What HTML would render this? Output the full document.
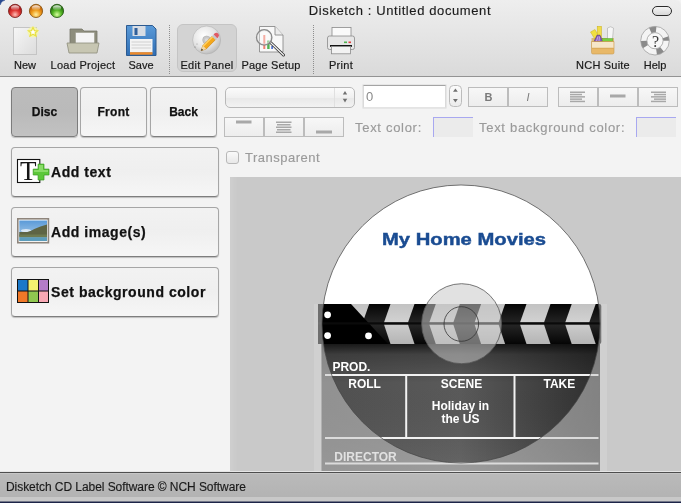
<!DOCTYPE html>
<html><head><meta charset="utf-8">
<style>
*{box-sizing:border-box}
html,body{-webkit-font-smoothing:antialiased;margin:0;padding:0;width:681px;height:503px;overflow:hidden;background:#f3f3f3;font-family:"Liberation Sans",sans-serif}
.a{position:absolute}
div,svg{will-change:transform}
#top{left:0;top:0;width:681px;height:77px;background:linear-gradient(#eeeeee,#e6e6e6 40%,#dadada);border-bottom:1px solid #939393;border-radius:5px 5px 0 0}
.lbl{-webkit-text-stroke:0.2px #1a1a1a;position:absolute;top:59px;font-size:11px;line-height:12px;color:#1a1a1a;white-space:nowrap;text-align:center}
.title{-webkit-text-stroke:0.15px #1d1d1d;left:0;width:800px;top:4px;font-size:13px;line-height:14px;color:#1d1d1d;text-align:center;letter-spacing:0.6px}
.light{position:absolute;top:4px;width:14px;height:14px;border-radius:50%}
.btn{-webkit-text-stroke:0.25px #111;position:absolute;border:1px solid #a6a6a6;border-bottom-color:#7e7e7e;border-radius:4px;background:linear-gradient(#f2f2f2,#efefef 50%,#f6f6f6);box-shadow:0 1px 1px rgba(0,0,0,.22);font-weight:bold;color:#111;white-space:nowrap}
.tab{top:87px;width:66px;height:50px;font-size:12px;line-height:48px;text-align:center}
.big{left:11px;width:208px;height:50px;font-size:14px;letter-spacing:0.55px;line-height:48px;padding-left:39px}
.gl{-webkit-text-stroke:0.15px #9a9a9a;position:absolute;font-size:13px;letter-spacing:0.7px;color:#9a9a9a;white-space:nowrap;line-height:18px}
.seg{position:absolute;border:1px solid #bcbcbc;background:linear-gradient(#f7f7f7,#ededed)}
</style></head><body>
<div id="top" class="a"></div>
<div class="a title">Disketch : Untitled document</div>

<div class="a" style="left:0;top:0;width:5px;height:5px;background:radial-gradient(circle at 5.5px 5.5px,#eeeeee 4.2px,#2a4a90 5.6px)"></div>
<svg class="a" style="left:0;top:0" width="70" height="22">
 <defs>
  <radialGradient id="lr" cx="0.5" cy="0.78" r="0.6"><stop offset="0" stop-color="#ffc0b8"/><stop offset="0.55" stop-color="#e03a36"/><stop offset="1" stop-color="#b01818"/></radialGradient>
  <radialGradient id="lo" cx="0.5" cy="0.78" r="0.6"><stop offset="0" stop-color="#fff0a0"/><stop offset="0.55" stop-color="#f0a020"/><stop offset="1" stop-color="#c86808"/></radialGradient>
  <radialGradient id="lg" cx="0.5" cy="0.78" r="0.6"><stop offset="0" stop-color="#d8ffa0"/><stop offset="0.55" stop-color="#58b828"/><stop offset="1" stop-color="#287810"/></radialGradient>
  <linearGradient id="hl" x1="0" y1="0" x2="0" y2="1"><stop offset="0" stop-color="#fff" stop-opacity="0.9"/><stop offset="1" stop-color="#fff" stop-opacity="0"/></linearGradient>
 </defs>
 <circle cx="15.1" cy="10.9" r="6.6" fill="url(#lr)" stroke="#7a2420" stroke-width="0.9"/>
 <circle cx="36" cy="10.9" r="6.6" fill="url(#lo)" stroke="#8a5a18" stroke-width="0.9"/>
 <circle cx="57" cy="10.9" r="6.6" fill="url(#lg)" stroke="#2a5a18" stroke-width="0.9"/>
 <ellipse cx="15.1" cy="7.8" rx="4.2" ry="2.6" fill="url(#hl)"/>
 <ellipse cx="36" cy="7.8" rx="4.2" ry="2.6" fill="url(#hl)"/>
 <ellipse cx="57" cy="7.8" rx="4.2" ry="2.6" fill="url(#hl)"/>
</svg>
<div class="a" style="left:652px;top:6px;width:20px;height:10px;border:1.5px solid #2a2a2a;border-radius:5px;background:linear-gradient(#f4f4f4,#d8d8d8)"></div>
<!-- pressed edit panel -->
<div class="a" style="left:177px;top:24px;width:60px;height:48px;border-radius:6px;background:#d3d3d3;border:1px solid #c4c4c4"></div>
<!-- separators -->
<div class="a" style="left:169px;top:25px;width:1px;height:49px;background:repeating-linear-gradient(#8e8e8e 0 1px,transparent 1px 2px)"></div>
<div class="a" style="left:313px;top:25px;width:1px;height:49px;background:repeating-linear-gradient(#8e8e8e 0 1px,transparent 1px 2px)"></div>
<svg class="a" style="left:0;top:0" width="681" height="77" viewBox="0 0 681 77">
 <!-- New -->
 <defs>
  <linearGradient id="docg" x1="0" y1="0" x2="1" y2="1"><stop offset="0" stop-color="#f6f6f6"/><stop offset="1" stop-color="#dcdcdc"/></linearGradient>
  <radialGradient id="cdg" cx="0.4" cy="0.35" r="0.7"><stop offset="0" stop-color="#ffffff"/><stop offset="0.6" stop-color="#e4e4e4"/><stop offset="1" stop-color="#b8b8b8"/></radialGradient>
  <linearGradient id="flop" x1="0" y1="0" x2="0" y2="1"><stop offset="0" stop-color="#5a9ad8"/><stop offset="1" stop-color="#2f6eb4"/></linearGradient>
 </defs>
 <rect x="13.5" y="27.5" width="23" height="27" fill="url(#docg)" stroke="#c4c4c4"/>
 <circle cx="33" cy="32" r="5.5" fill="#f8f8a0" opacity="0.8"/>
 <polygon points="33,27.5 34.4,30.6 37.6,30.8 35.1,32.9 36,36 33,34.2 30,36 30.9,32.9 28.4,30.8 31.6,30.6" fill="#ffffff" stroke="#e8e040" stroke-width="1.2"/>
 <!-- Load project folder -->
 <path d="M70,29 h12 l2,2 h13 v13 h-27 z" fill="#8d8d7c" stroke="#77776a" stroke-width="0.8"/>
 <rect x="75.5" y="32.5" width="19" height="12" fill="#f4f4f4" stroke="#9a9a8a" stroke-width="0.6"/>
 <path d="M67,43 h32 l-2,10 h-28 z" fill="#c7c6b2" stroke="#8e8e7c" stroke-width="0.8"/>
 <!-- Save floppy -->
 <path d="M126.5,25.5 h26 l3.5,3.5 v26.5 h-29.5 z" fill="url(#flop)" stroke="#2c5a90"/>
 <rect x="132.5" y="26" width="13" height="10" fill="#d8dde4"/>
 <rect x="134.5" y="28" width="3" height="7" fill="#2f5f9a"/>
 <rect x="130" y="39" width="22.5" height="13.5" fill="#f4f4f4"/>
 <line x1="131.5" y1="42" x2="151" y2="42" stroke="#c8c8c8" stroke-width="0.8"/>
 <line x1="131.5" y1="45" x2="151" y2="45" stroke="#c8c8c8" stroke-width="0.8"/>
 <line x1="131.5" y1="48" x2="151" y2="48" stroke="#c8c8c8" stroke-width="0.8"/>
 <rect x="130" y="52.2" width="22.5" height="2.5" fill="#ee8a2a"/>
 <!-- Edit panel CD + pencil -->
 <circle cx="206.6" cy="40" r="14" fill="url(#cdg)" stroke="#b0b0b0" stroke-width="0.6"/>
 <circle cx="206.6" cy="40" r="4" fill="#c8c8c8" stroke="#a8a8a8" stroke-width="0.5"/>
 <circle cx="206.6" cy="40" r="1.8" fill="#d9d9d9"/>
 <g transform="translate(201,50.8) rotate(-45)">
  <path d="M0,0 L5,-2.4 H18.5 V2.4 H5 Z" fill="#f4a81c" stroke="#c07810" stroke-width="0.5"/>
  <path d="M0,0 L5,-2.4 V2.4 Z" fill="#f0d8a8"/>
  <path d="M0,0 L2,-1 V1 Z" fill="#222"/>
  <rect x="5" y="-2.4" width="13.5" height="1.4" fill="#ffd060"/>
  <rect x="18" y="-2.6" width="2.5" height="5.2" fill="#c8c8c8"/>
  <path d="M20.5,-2.6 h1.2 a2.6,2.6 0 0 1 0,5.2 h-1.2 z" fill="#e05a64"/>
 </g>
 <circle cx="195" cy="47" r="0.6" fill="#777"/><circle cx="197" cy="44" r="0.5" fill="#888"/>
 <!-- Page setup -->
 <path d="M259.5,26.5 h15.5 l8,8.5 v17 h-23.5 z" fill="#f8f8f8" stroke="#8c8c8c" stroke-width="0.9"/>
 <path d="M275,26.5 v8.5 h8" fill="#ececec" stroke="#8c8c8c" stroke-width="0.9"/>
 <rect x="263.3" y="35" width="2" height="14" fill="#f08070"/>
 <rect x="267.2" y="40.5" width="2.4" height="8.5" fill="#50b050"/>
 <rect x="271.3" y="46" width="1.6" height="3" fill="#4466cc"/>
 <path d="M270.5,42.5 L283.5,55" stroke="#333" stroke-width="3" stroke-linecap="round"/>
 <path d="M270.5,42.5 L283.5,55" stroke="#f4f4f4" stroke-width="1.2" stroke-linecap="round"/>
 <circle cx="264.2" cy="37.4" r="7.6" fill="rgba(255,255,255,0.35)" stroke="#8a8a8a" stroke-width="1.5"/>
 <circle cx="264.2" cy="37.4" r="6.6" fill="none" stroke="#e8e8e8" stroke-width="0.6"/>
 <!-- Print -->
 <rect x="332" y="27.5" width="19" height="10" fill="#fafafa" stroke="#8a8a8a" stroke-width="0.8"/>
 <rect x="327.5" y="36" width="27" height="13.5" rx="2" fill="#e6e6e6" stroke="#8a8a8a" stroke-width="0.8"/>
 <rect x="344" y="41.5" width="3" height="1.6" fill="#50b050"/>
 <rect x="348.5" y="41.5" width="2.5" height="1.6" fill="#e04040"/>
 <rect x="330" y="45" width="22" height="1.8" fill="#111"/>
 <rect x="331.5" y="46.5" width="19" height="7.3" fill="#f2f2f2" stroke="#8a8a8a" stroke-width="0.8"/>
 <!-- NCH suite -->
 <rect x="591.5" y="38" width="22.5" height="4" fill="#d8b878"/>
 <path d="M590.5,32 l4.5,-2.5 l5,9 l-4,2.5 z" fill="#f0e040" stroke="#c8b020" stroke-width="0.5"/>
 <rect x="597.2" y="26.3" width="4.3" height="12" fill="#f0dc48" stroke="#c8b020" stroke-width="0.5"/>
 <path d="M607.5,28 q3,-2.5 6,0 l-1,11 h-5 z" fill="#f6f6f6" stroke="#a8a8a8" stroke-width="0.6"/>
 <path d="M594,41.7 l3,-6.5 h3 l2.6,6.5 z" fill="#8a5cc0" stroke="#4a2a80" stroke-width="0.6"/>
 <path d="M596.5,41 l1.5,-4.5 M599,41 l0.5,-4.5" stroke="#e8e0f0" stroke-width="0.6"/>
 <rect x="602.6" y="38.5" width="10" height="3" fill="#78d040" stroke="#50a020" stroke-width="0.4"/>
 <path d="M591.5,41.5 h22.5 v11 a1.5,1.5 0 0 1 -1.5,1.5 h-19.5 a1.5,1.5 0 0 1 -1.5,-1.5 z" fill="#e8b868" stroke="#c89a50" stroke-width="0.6"/>
 <rect x="592" y="42" width="21.5" height="6" fill="#f6e6c8"/>
 <line x1="592" y1="48.2" x2="613.5" y2="48.2" stroke="#d0a050" stroke-width="0.7"/>
 <!-- Help lifebuoy -->
 <circle cx="655" cy="40.7" r="11.2" fill="none" stroke="#f4f4f4" stroke-width="6.2"/>
 <circle cx="655" cy="40.7" r="11.2" fill="none" stroke="#8a8a8a" stroke-width="6.2" stroke-dasharray="6 12.85" stroke-dashoffset="-9.9"/>
 <circle cx="655" cy="40.7" r="14.3" fill="none" stroke="#a0a0a0" stroke-width="0.8"/>
 <circle cx="655" cy="40.7" r="8.1" fill="#f8f8f8" stroke="#a0a0a0" stroke-width="0.8"/>
 <text x="655.5" y="47" font-family="Liberation Serif" font-size="16" text-anchor="middle" fill="#3a3a3a">?</text>
</svg>
<div class="lbl" style="left:0;width:50px">New</div>
<div class="lbl" style="left:43px;width:80px;letter-spacing:0.25px">Load Project</div>
<div class="lbl" style="left:111px;width:60px">Save</div>
<div class="lbl" style="left:172px;width:70px;letter-spacing:0.3px">Edit Panel</div>
<div class="lbl" style="left:236px;width:70px;letter-spacing:0.15px">Page Setup</div>
<div class="lbl" style="left:311px;width:60px;letter-spacing:0.3px">Print</div>
<div class="lbl" style="left:563px;width:80px;letter-spacing:0.2px">NCH Suite</div>
<div class="lbl" style="left:625px;width:60px">Help</div>

<!-- tabs -->
<div class="btn tab" style="left:11px;width:67px;background:linear-gradient(#bcbcbc,#bababa 50%,#c2c2c2);border-color:#7c7c7c">Disc</div>
<div class="btn tab" style="left:80px;width:67px;letter-spacing:0.3px">Front</div>
<div class="btn tab" style="left:150px;width:67px">Back</div>
<!-- big buttons -->
<div class="btn big" style="top:147px">Add text</div>
<div class="btn big" style="top:207px">Add image(s)</div>
<div class="btn big" style="top:267px">Set background color</div>
<svg class="a" style="left:0;top:140px" width="60" height="180" viewBox="0 140 60 180">
 <rect x="17.5" y="159.5" width="22.3" height="23" fill="#fff" stroke="#111" stroke-width="1.1"/>
 <text x="19.9" y="180.3" font-family="Liberation Serif" font-size="27" fill="#151515">T</text>
 <path d="M38.1,164.1 h5.9 v5 h5 v5.9 h-5 v5 h-5.9 v-5 h-4.9 v-5.9 h4.9 z" fill="#5cc83a" stroke="#3a9a22" stroke-width="0.7"/>
 <path d="M39,165 h4 v5 h5 v2 h-5 h-4 h-4.9 v-2 h4.9 z" fill="#9ce47c" opacity="0.7"/>
 <!-- image icon -->
 <rect x="17.8" y="218.8" width="30.6" height="23.9" fill="#fff" stroke="#8e857c" stroke-width="1.6"/>
 <defs><linearGradient id="sky" x1="0" y1="0" x2="0" y2="1"><stop offset="0" stop-color="#5a9ad8"/><stop offset="1" stop-color="#b8d4ec"/></linearGradient></defs>
 <rect x="19.3" y="220.5" width="27.7" height="20.5" fill="url(#sky)"/>
 <ellipse cx="26" cy="230.5" rx="5" ry="1.6" fill="#f0f4f8" opacity="0.8"/>
 <path d="M19.3,232 h8 q4,-1 7,-3 q6,-3 12.7,-4.5 v12 h-27.7 z" fill="#5e6444"/>
 <path d="M19.3,234.5 h27.7 v3 h-27.7 z" fill="#6e7a50"/>
 <rect x="19.3" y="237.3" width="27.7" height="3.7" fill="#5c9cba"/>
 <!-- color grid -->
 <rect x="17" y="279" width="32" height="24" fill="#111"/>
 <rect x="18" y="280" width="9.5" height="10.5" fill="#1a78c8"/>
 <rect x="28.5" y="280" width="9.5" height="10.5" fill="#f4f070"/>
 <rect x="39" y="280" width="9" height="10.5" fill="#b47cc8"/>
 <rect x="18" y="291.5" width="9.5" height="10.5" fill="#f07828"/>
 <rect x="28.5" y="291.5" width="9.5" height="10.5" fill="#90c850"/>
 <rect x="39" y="291.5" width="9" height="10.5" fill="#f8a8b4"/>
</svg>
<!-- font dropdown -->
<div class="a" style="left:225px;top:87px;width:130px;height:21px;border:1px solid #b8b8b8;border-radius:5px;background:linear-gradient(#fbfbfb,#f0f0f0 50%,#e8e8e8 51%,#f2f2f2)"></div>
<div class="a" style="left:334px;top:88px;width:1px;height:19px;background:#e0e0e0"></div>
<svg class="a" style="left:335px;top:88px" width="20" height="20"><path d="M7.8,6.6 L10,3 L12.2,6.6 z M7.8,10.7 L10,14.6 L12.2,10.7 z" fill="#707070"/></svg>
<!-- size field -->
<div class="a" style="left:362px;top:84px;width:85px;height:25px;border:1px solid #e6e6e6;border-radius:1px"></div><div class="a" style="left:363px;top:85px;width:83px;height:23px;background:#fff;border:1px solid #dadada;border-top-color:#a4a4a4;border-bottom-color:#e4e4e4"></div>
<div class="a" style="left:366px;top:89px;font-size:13px;line-height:16px;color:#8a8a8a">0</div>
<div class="a" style="left:449px;top:85px;width:13px;height:22px;border:1px solid #bcbcbc;border-radius:4.5px;background:linear-gradient(#fbfbfb,#ececec)"></div>
<svg class="a" style="left:449px;top:85px" width="13" height="22"><path d="M4,6.8 l2.4,-3.4 l2.4,3.4 z M4,14 l2.4,3.6 l2.4,-3.6 z" fill="#707070"/></svg>
<!-- B I -->
<div class="seg" style="left:468px;top:87px;width:40px;height:20px"></div>
<div class="seg" style="left:508px;top:87px;width:40px;height:20px"></div>
<div class="a" style="left:468px;top:90px;width:41px;text-align:center;font-size:11px;font-weight:bold;color:#7a7a7a;line-height:14px">B</div>
<div class="a" style="left:508px;top:90px;width:40px;text-align:center;font-size:11px;font-style:italic;color:#7a7a7a;line-height:14px">I</div>
<!-- align -->
<div class="seg" style="left:558px;top:87px;width:40px;height:20px"></div>
<div class="seg" style="left:598px;top:87px;width:40px;height:20px"></div>
<div class="seg" style="left:638px;top:87px;width:40px;height:20px"></div>
<svg class="a" style="left:558px;top:87px" width="120" height="20">
 <g fill="#a8a8a8">
 <rect x="12" y="4.5" width="15" height="1.5"/><rect x="12" y="6.8" width="12" height="1.5"/><rect x="12" y="9.1" width="15" height="1.5"/><rect x="12" y="11.4" width="12" height="1.5"/><rect x="12" y="13.7" width="15" height="1.5"/>
 <rect x="52" y="7.5" width="15.5" height="3"/>
 <rect x="93" y="4.5" width="15" height="1.5"/><rect x="96" y="6.8" width="12" height="1.5"/><rect x="93" y="9.1" width="15" height="1.5"/><rect x="96" y="11.4" width="12" height="1.5"/><rect x="93" y="13.7" width="15" height="1.5"/>
 </g>
</svg>
<!-- valign -->
<div class="seg" style="left:224px;top:117px;width:40px;height:20px"></div>
<div class="seg" style="left:264px;top:117px;width:40px;height:20px"></div>
<div class="seg" style="left:304px;top:117px;width:40px;height:20px"></div>
<svg class="a" style="left:224px;top:117px" width="120" height="20">
 <g fill="#a8a8a8">
 <rect x="12" y="3.5" width="15.5" height="3"/>
 <rect x="52" y="4.5" width="15.5" height="1.5"/><rect x="53" y="7" width="13.5" height="1.5"/><rect x="52" y="9.5" width="15.5" height="1.5"/><rect x="53" y="12" width="13.5" height="1.5"/><rect x="52" y="14.5" width="15.5" height="1.5"/>
 <rect x="92" y="13.5" width="16" height="3"/>
 </g>
</svg>
<div class="gl" style="left:355px;top:119px">Text color:</div>
<div class="a" style="left:433px;top:117px;width:40px;height:20px;background:#ebebeb;border-top:1px solid #a8a8f0;border-left:1px solid #a8a8f0"></div>
<div class="gl" style="left:479px;top:119px">Text background color:</div>
<div class="a" style="left:636px;top:117px;width:40px;height:20px;background:#ebebeb;border-top:1px solid #a8a8f0;border-left:1px solid #a8a8f0"></div>
<!-- transparent -->
<div class="a" style="left:226px;top:151px;width:13px;height:13px;border:1px solid #b8b8b8;border-radius:3px;background:linear-gradient(#fafafa,#e8e8e8)"></div>
<div class="gl" style="left:245px;top:149px;letter-spacing:0.5px">Transparent</div>
<!-- canvas -->
<div class="a" style="left:230px;top:177px;width:451px;height:295px;background:#c9c9c9"></div>

<svg class="a" style="left:230px;top:177px" width="451" height="295" viewBox="230 177 451 295">
 <defs>
  <clipPath id="cv"><rect x="230" y="177" width="451" height="295"/></clipPath><linearGradient id="edg" x1="0" y1="0" x2="1" y2="0"><stop offset="0" stop-color="#d6d6d6"/><stop offset="1" stop-color="#cacaca"/></linearGradient><clipPath id="sc"><rect x="318" y="304" width="282.5" height="40"/></clipPath>
  <linearGradient id="stk" x1="0" y1="0" x2="0" y2="1"><stop offset="0" stop-color="#050505"/><stop offset="0.5" stop-color="#262626"/><stop offset="1" stop-color="#050505"/></linearGradient>
  <linearGradient id="gry" x1="0" y1="0" x2="0" y2="1"><stop offset="0" stop-color="#c2c2c2"/><stop offset="1" stop-color="#d2d2d2"/></linearGradient>
  <linearGradient id="gry2" x1="0" y1="0" x2="0" y2="1"><stop offset="0" stop-color="#cccccc"/><stop offset="1" stop-color="#b4b4b4"/></linearGradient>
  <linearGradient id="body" x1="0" y1="0" x2="1" y2="0"><stop offset="0" stop-color="#505050"/><stop offset="0.5" stop-color="#5a5a5a"/><stop offset="1" stop-color="#2e2e2e"/></linearGradient>
  <linearGradient id="bodyv" x1="0" y1="0" x2="0" y2="1"><stop offset="0" stop-color="#000" stop-opacity="0.7"/><stop offset="0.08" stop-color="#000" stop-opacity="0.25"/><stop offset="0.3" stop-color="#000" stop-opacity="0"/><stop offset="1" stop-color="#fff" stop-opacity="0.08"/></linearGradient>
 </defs>
 <g clip-path="url(#cv)">
 <rect x="230" y="177" width="451" height="295" fill="#cacaca"/>
 <rect x="230" y="177" width="8" height="295" fill="url(#edg)"/>
 <circle cx="461" cy="324" r="139" fill="#fff"/>
 <!-- clapperboard -->
 <rect x="314" y="304" width="293" height="170" fill="#dadada"/>
 <rect x="321.5" y="344" width="278.5" height="130" fill="url(#body)"/>
 <rect x="321.5" y="344" width="278.5" height="130" fill="url(#bodyv)"/>
 <rect x="318" y="304" width="283.3" height="40" rx="2" fill="url(#stk)"/>
 <g clip-path="url(#sc)"><g fill="url(#gry)"><polygon points="345.2,304 369.2,304 362.7,322.5 338.7,322.5"/><polygon points="390.5,304 414.5,304 408,322.5 384,322.5"/><polygon points="435.8,304 459.8,304 453.3,322.5 429.3,322.5"/><polygon points="481.1,304 505.1,304 498.6,322.5 474.6,322.5"/><polygon points="526.5,304 550.5,304 544,322.5 520,322.5"/><polygon points="571.7,304 595.7,304 589.2,322.5 565.2,322.5"/><polygon points="617.0,304 641.0,304 634.5,322.5 610.5,322.5"/></g>
 <g fill="url(#gry2)"><polygon points="338.7,324.5 362.7,324.5 369.2,344 345.2,344"/><polygon points="384,324.5 408,324.5 414.5,344 390.5,344"/><polygon points="429.3,324.5 453.3,324.5 459.8,344 435.8,344"/><polygon points="474.6,324.5 498.6,324.5 505.1,344 481.1,344"/><polygon points="520,324.5 544,324.5 550.5,344 526.5,344"/><polygon points="565.2,324.5 589.2,324.5 595.7,344 571.7,344"/><polygon points="610.5,324.5 634.5,324.5 641.0,344 617.0,344"/></g>
 </g><polygon points="318,304 351,304 388,344 318,344" fill="#000"/>
 <rect x="318" y="322.3" width="282.5" height="2.2" fill="#0a0a0a"/>
 <g fill="#fff"><circle cx="327.6" cy="314.8" r="3.4"/><circle cx="327.6" cy="335.6" r="3.4"/><circle cx="368.5" cy="335.8" r="3.4"/></g>
 <g fill="#f2f2f2">
  <rect x="325" y="374" width="273.5" height="2"/>
  <rect x="405.2" y="375" width="2" height="63.5"/>
  <rect x="513.5" y="375" width="2" height="63.5"/>
  <rect x="325" y="437" width="273.5" height="2"/>
  <rect x="325" y="462.5" width="273.5" height="2"/>
 </g>
 <g fill="#fff" font-family="Liberation Sans" font-weight="bold" font-size="12">
  <text x="332.4" y="370.9">PROD.</text>
  <text x="364.6" y="388.3" text-anchor="middle">ROLL</text>
  <text x="461.5" y="388.3" text-anchor="middle">SCENE</text>
  <text x="559.4" y="388.3" text-anchor="middle">TAKE</text>
  <text x="460.4" y="410.3" text-anchor="middle">Holiday in</text>
  <text x="460.5" y="422.6" text-anchor="middle">the US</text>
  <text x="334.3" y="461.3">DIRECTOR</text>
 </g>
 <!-- dim outside disc -->
 <path d="M230,177 H681 V472 H230 Z M322,324 a139,139 0 1 0 278,0 a139,139 0 1 0 -278,0 Z" fill="#c9c9c9" fill-opacity="0.55" fill-rule="evenodd"/>
 <circle cx="461" cy="324" r="139" fill="none" stroke="#444" stroke-width="0.7"/>
 <!-- hole -->
 <circle cx="461.6" cy="323.7" r="40" fill="#c9c9c9" fill-opacity="0.55" stroke="#555" stroke-width="0.8"/>
 <circle cx="461.3" cy="324" r="17.3" fill="none" stroke="#333" stroke-width="0.8"/>
 <text x="382" y="245" font-family="Liberation Sans" font-weight="bold" font-size="17.2" fill="#1a4c92" stroke="#1a4c92" stroke-width="0.45" textLength="164" lengthAdjust="spacingAndGlyphs">My Home Movies</text>
 </g>
</svg>
<!-- status bar -->
<div class="a" style="left:0;top:471px;width:681px;height:32px;background:linear-gradient(#e6e6e6 0 1px,#4e4e4e 1px 2.5px,#c6c6c6 2.5px 3px,#bababa 3px,#b3b3b3 26px,#c8c8c8 26px 30px,#1c2448 31px)"></div>
<div class="a" style="left:6px;top:480px;font-size:12px;line-height:14px;color:#1a1a1a;-webkit-text-stroke:0.15px #1a1a1a;white-space:nowrap;letter-spacing:-0.06px">Disketch CD Label Software © NCH Software</div>
</body></html>
